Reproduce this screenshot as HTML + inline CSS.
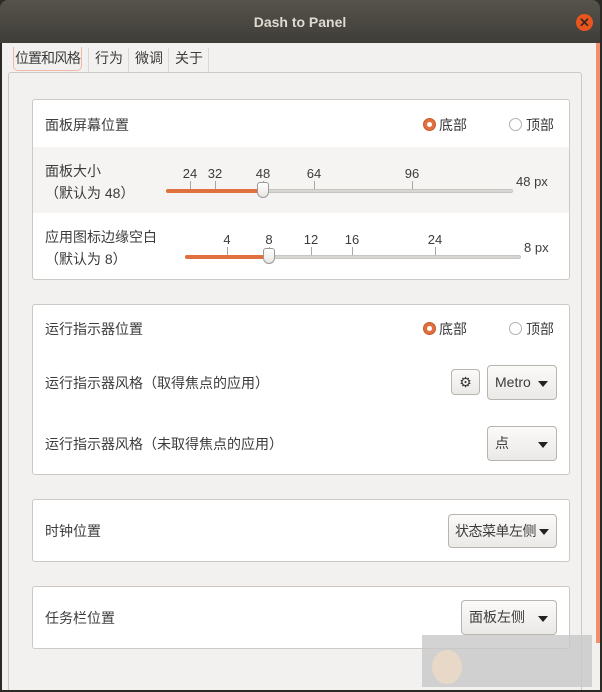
<!DOCTYPE html>
<html><head><meta charset="utf-8"><style>
*{margin:0;padding:0;box-sizing:border-box}
body{width:602px;height:692px;overflow:hidden;background:#2b2a27;font-family:"Liberation Sans","Noto Sans CJK SC",sans-serif;font-size:14px;color:#3c3c3c;position:relative}
.abs{position:absolute}
#title{left:0;top:0;width:600px;height:43px;background:linear-gradient(#56534c,#3f3d38);border-radius:8px 8px 0 0;color:#dfdbd2;font-weight:bold;font-size:14px;text-align:center;line-height:44px}
#close{left:576px;top:14px;width:17px;height:17px;border-radius:50%;background:#e9541f;color:#3a2a20;font-size:13px;font-weight:bold;text-align:center;line-height:17px}
#win{left:2px;top:43px;width:598px;height:647px;background:#f2f1f0}
#strip{left:596px;top:43px;width:4px;height:600px;background:#f0906a}
.tab{top:47px;height:24px;line-height:22px;font-size:14px;white-space:nowrap}
.sep{top:48px;width:1px;height:24px;background:#dcd9d5}
#frame{left:8px;top:72px;width:574px;height:618px;border:1px solid #cdc8c3;border-bottom:none;border-radius:3px 3px 0 0;background:#f2f1f0}
.box{left:32px;width:538px;background:#fff;border:1px solid #cdc8c3;border-radius:3px}
.t{position:absolute;white-space:nowrap;line-height:18px}
.btn{position:absolute;border:1px solid #b8b4ae;border-radius:4px;background:linear-gradient(#fbfaf9,#ebe9e7);font-size:14px;white-space:nowrap}
.arr{position:absolute;right:8px;top:50%;margin-top:-2px;border-left:5px solid transparent;border-right:5px solid transparent;border-top:6px solid #222}
.track{position:absolute;height:4px;background:#d8d6d3;border-radius:2px;border:1px solid #c8c5c1}
.fill{position:absolute;height:4px;background:#e0703e;border-radius:2px}
.tick{position:absolute;width:1px;height:8px;background:#a8a6a3}
.lab{position:absolute;font-size:13px;transform:translateX(-50%);line-height:15px}
.knob{position:absolute;width:12px;height:16px;background:linear-gradient(#fff,#e8e6e4);border:1px solid #999;border-radius:3px 3px 6px 6px}
.radio{position:absolute;width:13px;height:13px;border-radius:50%}
</style></head><body>
<div id="title" class="abs">Dash to Panel</div>
<div id="close" class="abs">✕</div>
<div id="win" class="abs"></div>
<div id="strip" class="abs"></div>
<div id="frame" class="abs"></div>
<div class="abs tab" style="left:13px;width:69px;border:1px solid #f0b9a4;border-top:none;border-radius:0 0 5px 5px;padding-left:1px;letter-spacing:-1px">位置和风格</div>
<div class="abs sep" style="left:88px"></div>
<div class="abs tab" style="left:95px">行为</div>
<div class="abs sep" style="left:128px"></div>
<div class="abs tab" style="left:135px">微调</div>
<div class="abs sep" style="left:168px"></div>
<div class="abs tab" style="left:175px">关于</div>
<div class="abs sep" style="left:208px"></div>

<div class="abs box" style="top:99px;height:181px">
 <div class="abs" style="left:0;top:47px;width:536px;height:66px;background:#f5f4f3"></div>
 <div class="t" style="left:12px;top:16px">面板屏幕位置</div>
 <div class="radio" style="left:390px;top:18px;background:#e0703e;border:1px solid #c55a2c"><div style="position:absolute;left:3px;top:3px;width:5px;height:5px;border-radius:50%;background:#fff"></div></div>
 <div class="t" style="left:406px;top:16px">底部</div>
 <div class="radio" style="left:476px;top:18px;border:1px solid #b5b2ae;background:#fff"></div>
 <div class="t" style="left:493px;top:16px">顶部</div>
 <div class="t" style="left:12px;top:62px">面板大小</div>
 <div class="t" style="left:12px;top:84px">（默认为 48）</div>
 <div class="track" style="left:133px;top:89px;width:347px"></div>
 <div class="fill" style="left:133px;top:89px;width:97px"></div>
 <div class="tick" style="left:157px;top:81px"></div><div class="lab" style="left:157px;top:66px">24</div>
 <div class="tick" style="left:182px;top:81px"></div><div class="lab" style="left:182px;top:66px">32</div>
 <div class="tick" style="left:230px;top:81px"></div><div class="lab" style="left:230px;top:66px">48</div>
 <div class="tick" style="left:281px;top:81px"></div><div class="lab" style="left:281px;top:66px">64</div>
 <div class="tick" style="left:379px;top:81px"></div><div class="lab" style="left:379px;top:66px">96</div>
 <div class="knob" style="left:224px;top:82px"></div>
 <div class="t" style="left:483px;top:73px;font-size:13px">48 px</div>
 <div class="t" style="left:12px;top:128px">应用图标边缘空白</div>
 <div class="t" style="left:12px;top:150px">（默认为 8）</div>
 <div class="track" style="left:152px;top:155px;width:336px"></div>
 <div class="fill" style="left:152px;top:155px;width:84px"></div>
 <div class="tick" style="left:194px;top:147px"></div><div class="lab" style="left:194px;top:132px">4</div>
 <div class="tick" style="left:236px;top:147px"></div><div class="lab" style="left:236px;top:132px">8</div>
 <div class="tick" style="left:278px;top:147px"></div><div class="lab" style="left:278px;top:132px">12</div>
 <div class="tick" style="left:319px;top:147px"></div><div class="lab" style="left:319px;top:132px">16</div>
 <div class="tick" style="left:402px;top:147px"></div><div class="lab" style="left:402px;top:132px">24</div>
 <div class="knob" style="left:230px;top:148px"></div>
 <div class="t" style="left:491px;top:139px;font-size:13px">8 px</div>
</div>

<div class="abs box" style="top:304px;height:171px">
 <div class="t" style="left:12px;top:15px">运行指示器位置</div>
 <div class="radio" style="left:390px;top:17px;background:#e0703e;border:1px solid #c55a2c"><div style="position:absolute;left:3px;top:3px;width:5px;height:5px;border-radius:50%;background:#fff"></div></div>
 <div class="t" style="left:406px;top:15px">底部</div>
 <div class="radio" style="left:476px;top:17px;border:1px solid #b5b2ae;background:#fff"></div>
 <div class="t" style="left:493px;top:15px">顶部</div>
 <div class="t" style="left:12px;top:69px">运行指示器风格（取得焦点的应用）</div>
 <div class="btn" style="left:418px;top:64px;width:29px;height:26px;text-align:center;line-height:24px;font-size:14px;color:#333">⚙</div>
 <div class="btn" style="left:454px;top:60px;width:70px;height:35px;line-height:33px;padding-left:7px">Metro<div class="arr"></div></div>
 <div class="t" style="left:12px;top:130px">运行指示器风格（未取得焦点的应用）</div>
 <div class="btn" style="left:454px;top:121px;width:70px;height:35px;line-height:33px;padding-left:7px">点<div class="arr"></div></div>
</div>

<div class="abs box" style="top:499px;height:63px">
 <div class="t" style="left:12px;top:22px">时钟位置</div>
 <div class="btn" style="left:415px;top:14px;width:109px;height:34px;line-height:32px;padding-left:6px;letter-spacing:-0.5px">状态菜单左侧<div class="arr" style="right:7px"></div></div>
</div>

<div class="abs box" style="top:586px;height:63px">
 <div class="t" style="left:12px;top:22px">任务栏位置</div>
 <div class="btn" style="left:428px;top:13px;width:96px;height:35px;line-height:33px;padding-left:7px">面板左侧<div class="arr"></div></div>
</div>

<div class="abs" style="left:422px;top:635px;width:170px;height:52px;background:rgba(200,200,200,.8)"></div>
<div class="abs" style="left:432px;top:650px;width:30px;height:34px;border-radius:50%;background:#e8d8c8"></div>
</body></html>
